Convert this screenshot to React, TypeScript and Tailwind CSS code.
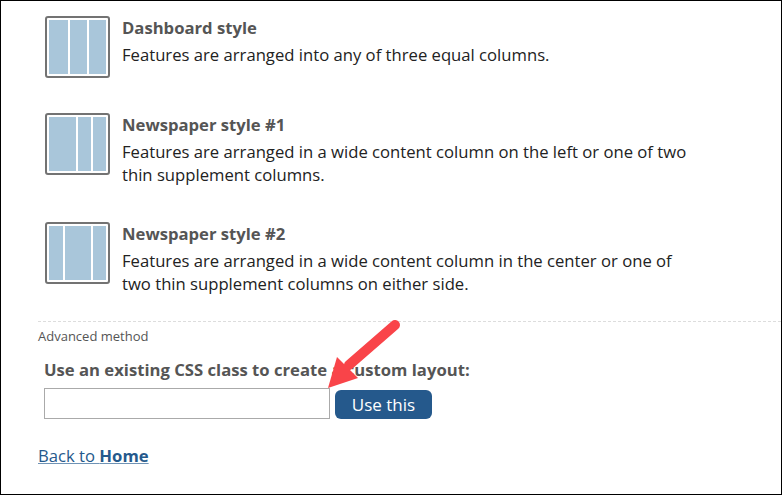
const layouts = [
  {
    title: 'Dashboard style',
    lines: ['Features are arranged into any of three equal columns.'],
    cols: ['w-[19px]', 'w-[17px]', 'w-[17px]'],
    rowH: 'h-[97px]',
  },
  {
    title: 'Newspaper style #1',
    lines: [
      'Features are arranged in a wide content column on the left or one of two',
      'thin supplement columns.',
    ],
    cols: ['w-[27px]', 'w-[13px]', 'w-[13px]'],
    rowH: 'h-[109px]',
  },
  {
    title: 'Newspaper style #2',
    lines: [
      'Features are arranged in a wide content column in the center or one of',
      'two thin supplement columns on either side.',
    ],
    cols: ['w-[14px]', 'w-[26px]', 'w-[13px]'],
    rowH: 'h-[99px]',
  },
];

function LayoutIcon({ cols }: { cols: string[] }) {
  return (
    <div className="flex h-[62px] w-[65px] shrink-0 gap-[2px] rounded-[3px] border-2 border-[#737373] bg-white p-[2px]">
      {cols.map((c, i) => (
        <div key={i} className={`${c} h-full bg-[#a9c6da]`} />
      ))}
    </div>
  );
}

export default function App() {
  return (
    <div className="relative h-[495px] w-[782px] overflow-hidden border border-black bg-white font-['Open_Sans',sans-serif] text-[#222]">
      <div className="pl-[44px] pt-[15px]">
        {layouts.map((l) => (
          <div key={l.title} className={`flex gap-[12px] ${l.rowH}`}>
            <LayoutIcon cols={l.cols} />
            <div className="text-[16.66px] leading-[23px]">
              <div className="mb-[4px] font-bold text-[#555]">{l.title}</div>
              {l.lines.map((t) => (
                <div key={t}>{t}</div>
              ))}
            </div>
          </div>
        ))}
      </div>

      {/* Advanced */}
      <div className="ml-[37px] border-t border-dashed border-[#ddd] pt-[5px]">
        <div className="text-[13px] leading-[18px] text-[#555]">Advanced method</div>
        <div className="pl-[6px] pt-[13px]">
          <div className="text-[16.66px] font-bold leading-[23px] text-[#555]">
            Use an existing CSS class to create a custom layout:
          </div>
          <div className="mt-[7px] flex items-center gap-[5px]">
            <input className="h-[31px] w-[286px] border border-[#aaa] bg-white" />
            <button className="mt-[2px] h-[29px] w-[97px] rounded-[6px] bg-[#25598c] text-[17px] text-white">
              Use this
            </button>
          </div>
        </div>
        <div className="mt-[25px] text-[16.66px] leading-[23px]">
          <a className="text-[#25598c] underline decoration-[#6f93b5]">
            Back to <b>Home</b>
          </a>
        </div>
      </div>

      {/* Arrow */}
      <svg className="absolute left-[326px] top-[318px]" width="76" height="72" viewBox="0 0 76 72">
        <path d="M68 6 L22 46" stroke="#f94449" strokeWidth="10" strokeLinecap="round" fill="none" />
        <path d="M1 69 L10 38 L31 59 Z" fill="#f94449" />
      </svg>
    </div>
  );
}
